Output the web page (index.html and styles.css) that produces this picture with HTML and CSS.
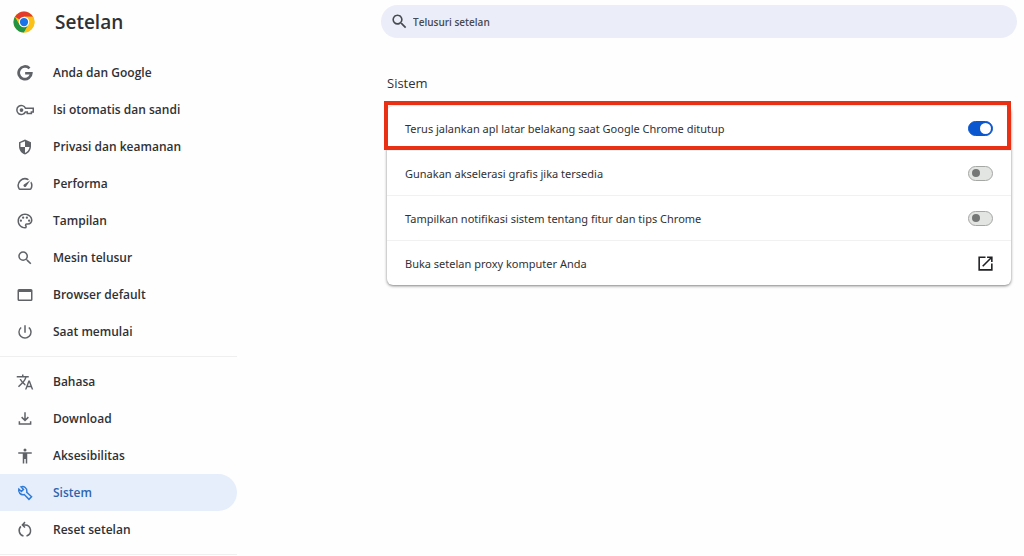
FILE: index.html
```html
<!DOCTYPE html>
<html lang="id">
<head>
    <meta charset="UTF-8">
    <title>Setelan - Sistem</title>
    <link rel="stylesheet" href="styles.css">
</head>
<body>

    <div class="page">
        <aside class="sidebar">
            <header class="brand">
                <svg class="logo" viewBox="0 0 48 48">
                    <circle cx="24" cy="24" r="23" fill="#fbc116"/>
                    <path d="M24 24 4.1 12.5A23 23 0 0 1 43.9 12.5H24z" fill="#e33b2e"/>
                    <path d="M4.1 12.5A23 23 0 0 0 24 47L34 29.7 24 24 14 29.7z" fill="#229342"/>
                    <path d="M43.9 12.5H24L34 29.7 24 47A23 23 0 0 0 43.9 12.5z" fill="#fbc116"/>
                    <circle cx="24" cy="24" r="11.5" fill="#fff"/>
                    <circle cx="24" cy="24" r="9" fill="#1a73e8"/>
                </svg>
                <h1>Setelan</h1>
            </header>

            <nav class="menu">
                <a href="#people">
                    <svg viewBox="0 0 24 24"><path d="M19.300 4.500A10.300 10.300 0 1 0 22.300 12v-1.500H12.200v3.500h6A6.600 6.600 0 1 1 16.700 7.100z"/></svg>
                    Anda dan Google
                </a>
                <a href="#autofill">
                    <svg viewBox="0 0 24 24"><g class="line"><path d="M12.600 9.500A6 6 0 1 0 12.600 14.500H15v2h5.500v-2H23v-5z"/></g><circle cx="7.300" cy="12" r="2.500"/></svg>
                    Isi otomatis dan sandi
                </a>
                <a href="#privacy">
                    <svg viewBox="0 0 24 24"><path d="M12 2 4 5.500v5.500c0 5 3.400 9.700 8 11 4.600-1.300 8-6 8-11V5.500L12 2zm0 10h6c-.500 3.700-2.900 6.800-6 7.900V12H6V6.800l6-2.600V12z"/></svg>
                    Privasi dan keamanan
                </a>
                <a href="#performance">
                    <svg viewBox="0 0 24 24"><path d="m20.380 8.570-1.230 1.850a8 8 0 0 1-.220 7.580H5.070A8 8 0 0 1 15.580 6.850l1.850-1.230A10 10 0 0 0 3.350 19a2 2 0 0 0 1.720 1h13.850a2 2 0 0 0 1.740-1 10 10 0 0 0-.270-10.440zm-9.790 6.840a2 2 0 0 0 2.830 0l5.660-8.490-8.490 5.660a2 2 0 0 0 0 2.830z"/></svg>
                    Performa
                </a>
                <a href="#appearance">
                    <svg viewBox="0 0 24 24"><path d="M12 22C6.490 22 2 17.510 2 12S6.490 2 12 2s10 4.040 10 9c0 3.310-2.690 6-6 6h-1.770c-.280 0-.500.220-.500.500 0 .120.050.230.130.330.410.470.640 1.060.640 1.670A2.500 2.500 0 0 1 12 22zm0-18c-4.410 0-8 3.590-8 8s3.590 8 8 8c.280 0 .500-.220.500-.500a.540.540 0 0 0-.140-.350c-.410-.460-.630-1.050-.630-1.650a2.500 2.500 0 0 1 2.500-2.500H16c2.210 0 4-1.790 4-4 0-3.860-3.590-7-8-7z"/><circle cx="6.500" cy="11.500" r="1.500"/><circle cx="9.500" cy="7.500" r="1.500"/><circle cx="14.500" cy="7.500" r="1.500"/><circle cx="17.500" cy="11.500" r="1.500"/></svg>
                    Tampilan
                </a>
                <a href="#search">
                    <svg viewBox="0 0 24 24"><path d="M15.500 14h-.790l-.280-.270A6.471 6.471 0 0 0 16 9.500 6.500 6.500 0 1 0 9.500 16c1.610 0 3.090-.590 4.230-1.570l.270.280v.790l5 4.990L20.490 19l-4.990-5zm-6 0C7.010 14 5 11.990 5 9.500S7.010 5 9.500 5 14 7.010 14 9.500 11.990 14 9.500 14z"/></svg>
                    Mesin telusur
                </a>
                <a href="#browser">
                    <svg viewBox="0 0 24 24"><path d="M20 4H4a2 2 0 0 0-2 2v12a2 2 0 0 0 2 2h16a2 2 0 0 0 2-2V6a2 2 0 0 0-2-2zm0 14H4V8h16v10z"/></svg>
                    Browser default
                </a>
                <a href="#startup">
                    <svg viewBox="0 0 24 24"><path d="M13 3h-2v10h2V3zm4.830 2.170-1.420 1.420A6.920 6.920 0 0 1 19 12c0 3.870-3.130 7-7 7A6.995 6.995 0 0 1 7.580 6.580L6.170 5.170A8.932 8.932 0 0 0 3 12a9 9 0 0 0 18 0c0-2.740-1.230-5.180-3.170-6.830z"/></svg>
                    Saat memulai
                </a>
            </nav>

            <nav class="menu">
                <a href="#languages">
                    <svg viewBox="0 0 24 24"><path d="m12.870 15.070-2.540-2.510.030-.030A17.520 17.520 0 0 0 14.070 6H17V4h-7V2H8v2H1v1.990h11.170C11.500 7.920 10.440 9.750 9 11.350 8.070 10.320 7.300 9.190 6.690 8h-2c.730 1.630 1.730 3.170 2.980 4.560l-5.090 5.020L4 19l5-5 3.110 3.110.760-2.040zM18.500 10h-2L12 22h2l1.120-3h4.750L21 22h2l-4.500-12zm-2.620 7 1.620-4.330L19.120 17h-3.240z"/></svg>
                    Bahasa
                </a>
                <a href="#downloads">
                    <svg viewBox="0 0 24 24"><g class="line"><path d="M12 3v11M7.500 9.500l4.500 4.500 4.500-4.500M4.500 15v3.500h15V15"/></g></svg>
                    Download
                </a>
                <a href="#accessibility">
                    <svg viewBox="0 0 24 24"><path d="M12 2a2 2 0 1 1 0 4 2 2 0 0 1 0-4zm9 7h-6v13h-2v-6h-2v6H9V9H3V7h18v2z"/></svg>
                    Aksesibilitas
                </a>
                <a href="#system" class="active">
                    <svg viewBox="0 0 24 24"><g class="line"><path d="M14.500 9.800a5.800 5.800 0 0 0-7.800-6L10 7.200 7.200 10 3.800 6.700a5.800 5.800 0 0 0 7.200 7.300l6.300 6.500 3.400-3.400L14.300 10.900z"/></g></svg>
                    Sistem
                </a>
                <a href="#reset">
                    <svg viewBox="0 0 24 24"><g class="line"><path d="M6.500 7.200a7.500 7.500 0 0 0 3.500 12.700M14 19.900A7.500 7.500 0 0 0 12 5.200H9M12 1.500 8.500 5.200 12 8.800"/></g></svg>
                    Reset setelan
                </a>
            </nav>
        </aside>

        <main class="content">
            <label class="search">
                <svg viewBox="0 0 24 24"><path d="M15.500 14h-.790l-.280-.270A6.471 6.471 0 0 0 16 9.500 6.500 6.500 0 1 0 9.500 16c1.610 0 3.090-.590 4.230-1.570l.270.280v.790l5 4.990L20.490 19l-4.990-5zm-6 0C7.010 14 5 11.990 5 9.500S7.010 5 9.500 5 14 7.010 14 9.500 11.990 14 9.500 14z"/></svg>
                <input type="search" placeholder="Telusuri setelan" aria-label="Telusuri setelan">
            </label>

            <section class="section">
                <h2>Sistem</h2>
                <div class="card">
                    <div class="row highlight">
                        <label for="background">Terus jalankan apl latar belakang saat Google Chrome ditutup</label>
                        <input type="checkbox" class="toggle" id="background" checked>
                    </div>
                    <div class="row">
                        <label for="graphics">Gunakan akselerasi grafis jika tersedia</label>
                        <input type="checkbox" class="toggle" id="graphics">
                    </div>
                    <div class="row">
                        <label for="tips">Tampilkan notifikasi sistem tentang fitur dan tips Chrome</label>
                        <input type="checkbox" class="toggle" id="tips">
                    </div>
                    <a href="#proxy" class="row">
                        Buka setelan proxy komputer Anda
                        <svg viewBox="0 0 24 24"><path d="M19 19H5V5h7V3H3v18h18v-9h-2v7zM14 3v2h3.590l-9.830 9.830 1.410 1.410L19 6.410V10h2V3h-7z"/></svg>
                    </a>
                </div>
            </section>
        </main>
    </div>

</body>
</html>
```
FILE: styles.css
```css
* {
    box-sizing: border-box;
}
body {
    margin: 0;
    background-color: #fefefe;
    color: #303134;
    font-family: "Open Sans", "Noto Sans", sans-serif;
    font-size: 12px;
}
a {
    color: inherit;
    text-decoration: none;
}
.page {
    display: flex;
}

/* sidebar */
.sidebar {
    flex: none;
    width: 237px;
}
.brand {
    display: flex;
    align-items: center;
    gap: 20px;
    height: 44px;
    padding-left: 13px;
    margin-bottom: 10px;
}
.logo {
    width: 22px;
    height: 22px;
}
.brand h1 {
    margin: 0;
    font-size: 19px;
    font-weight: 600;
}
.menu {
    padding-bottom: 6px;
    border-bottom: 1px solid #efefef;
}
.menu + .menu {
    padding-top: 6px;
}
.menu a {
    display: flex;
    align-items: center;
    gap: 19px;
    height: 37px;
    padding-left: 16px;
    border-radius: 0 19px 19px 0;
    font-weight: 600;
}
.menu svg {
    width: 18px;
    height: 18px;
    fill: #5f6368;
}
.line {
    fill: none;
    stroke: #5f6368;
    stroke-width: 2;
}
.menu .active {
    background-color: #e6eefb;
    color: #2f65ad;
}
.active svg .line {
    stroke: #2f7bd8;
}

/* content */
.content {
    flex: 1;
    padding: 5px 7px 0 144px;
}
.search {
    display: flex;
    align-items: center;
    gap: 4px;
    height: 33px;
    padding: 0 16px 0 9px;
    border-radius: 17px;
    background-color: #ebedf8;
}
.search svg {
    width: 19px;
    height: 19px;
    fill: #474a50;
}
.search input {
    flex: 1;
    padding: 0;
    border: none;
    outline: none;
    background: none;
    color: #474a50;
    font-family: inherit;
    font-size: 10px;
    font-weight: 600;
}
.search input::placeholder {
    color: #474a50;
}
.section {
    padding: 36px 6px 0;
}
.section h2 {
    margin: 0 0 13px;
    font-size: 13px;
    font-weight: 400;
    line-height: 19px;
}
.card {
    border-radius: 6px;
    background-color: #fff;
    box-shadow: 0 1px 3px rgba(0, 0, 0, 0.5);
    font-family: "Noto Sans", "Open Sans", sans-serif;
    font-size: 11px;
}
.row {
    position: relative;
    display: flex;
    align-items: center;
    justify-content: space-between;
    height: 45px;
    padding: 0 18px;
    border-bottom: 1px solid #f1f1f1;
}
.row:last-child {
    height: 44px;
    border-bottom: none;
}
.row svg {
    width: 19px;
    height: 19px;
    margin-right: -2px;
    fill: #202124;
}
.highlight::after {
    content: "";
    position: absolute;
    inset: -5px 0 0 -3px;
    border: 4px solid #ea3014;
    pointer-events: none;
}

/* switches */
.toggle {
    appearance: none;
    display: flex;
    align-items: center;
    width: 25px;
    height: 15px;
    margin: 0;
    padding: 0 3px;
    border: 1px solid #a5a7a5;
    border-radius: 8px;
    background-color: #e3e5e3;
    cursor: pointer;
}
.toggle::before {
    content: "";
    width: 8px;
    height: 8px;
    border-radius: 50%;
    background-color: #747775;
}
.toggle:checked {
    justify-content: flex-end;
    padding: 0 1px;
    border-color: #0b57d0;
    background-color: #0b57d0;
}
.toggle:checked::before {
    width: 11px;
    height: 11px;
    background-color: #fff;
}
```
